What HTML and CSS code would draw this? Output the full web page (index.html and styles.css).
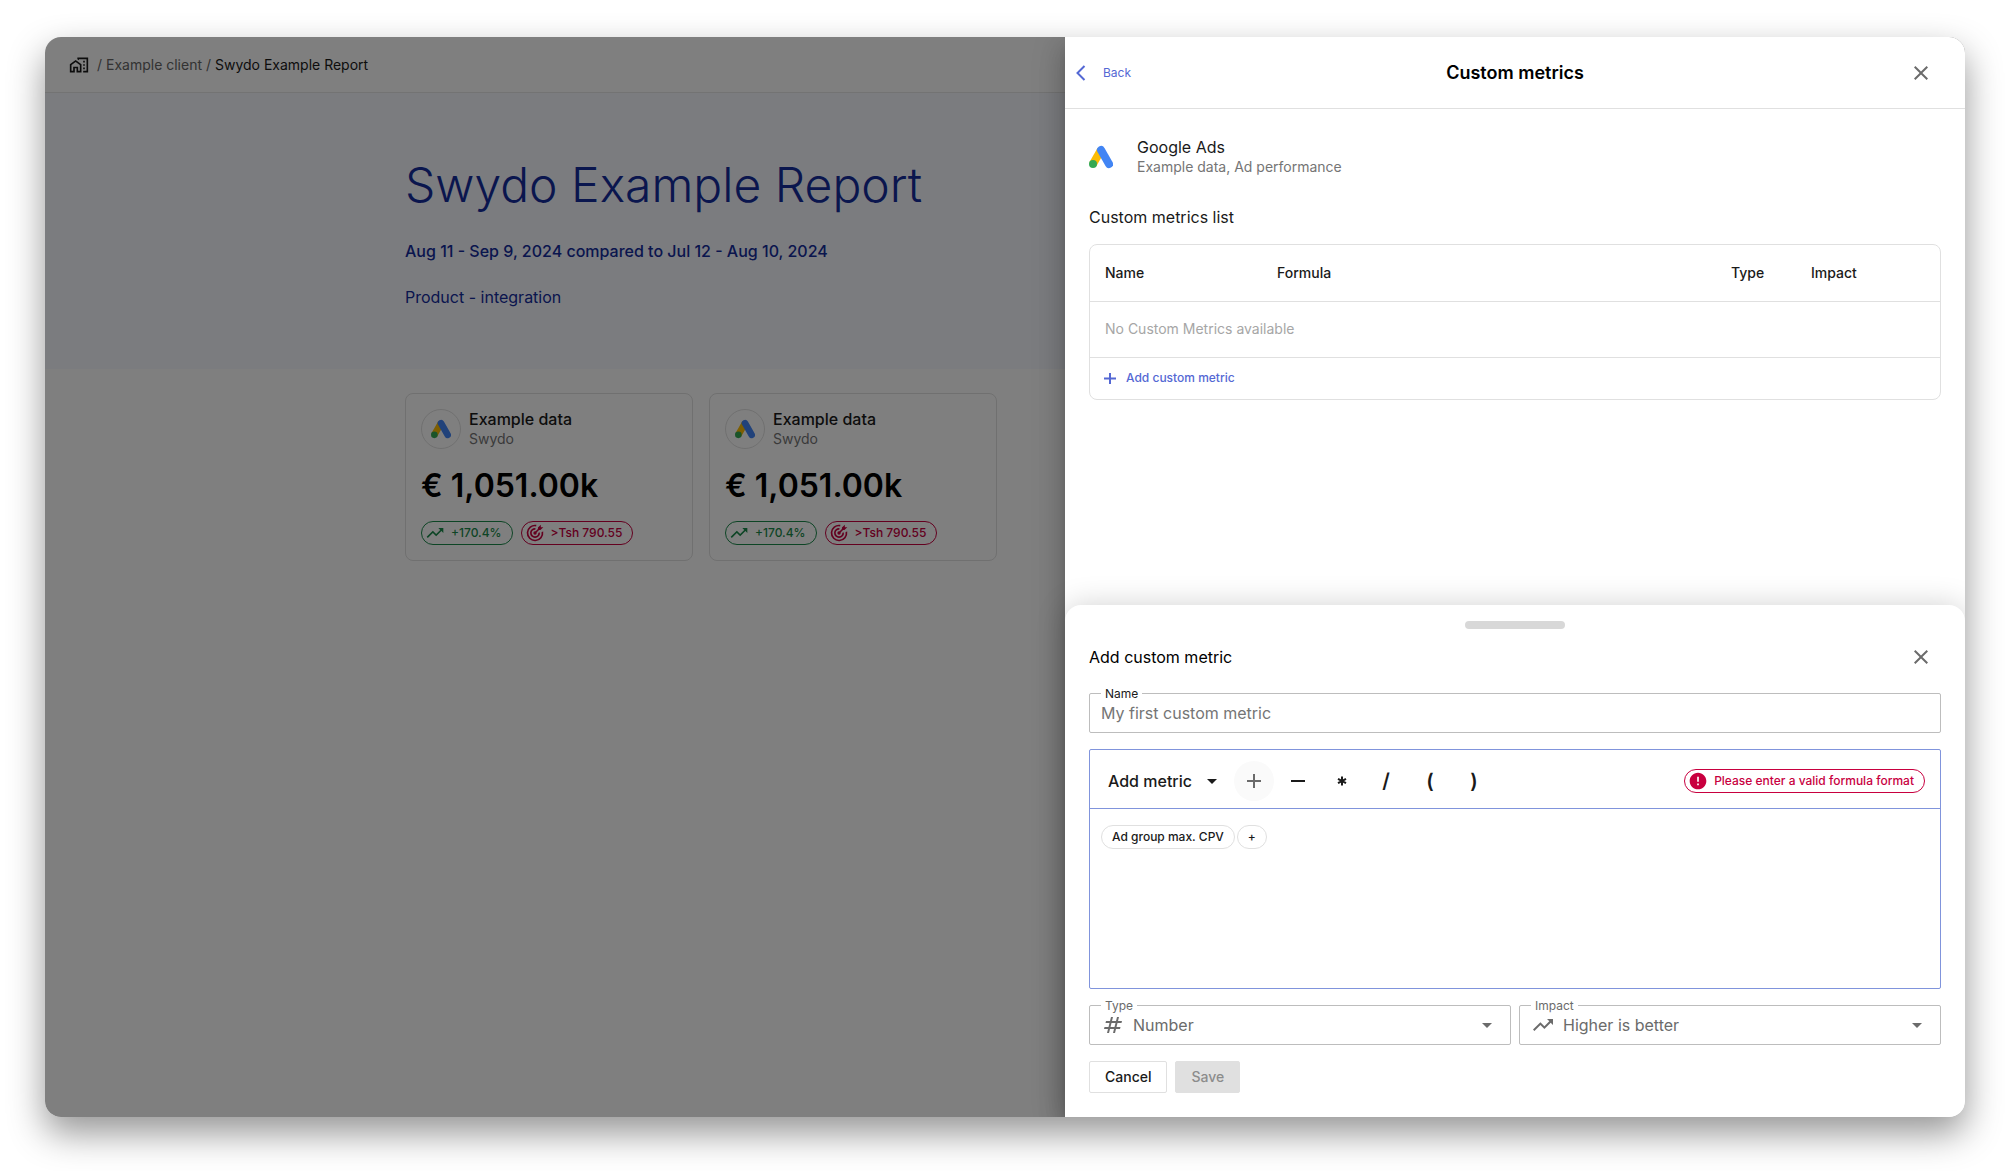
FILE: index.html
```html
<!DOCTYPE html>
<html lang="en">
  <head>
    <meta charset="utf-8">
    <meta name="viewport" content="width=device-width, initial-scale=1">
    <title>Swydo Example Report</title>
    <link rel="stylesheet" href="styles.css">
  </head>
<body>
  <!-- shared icons -->
  <svg class="sprite" aria-hidden="true">
    <symbol id="i-ads" viewBox="0 0 24 24">
      <path d="M12 5L4 19" stroke="#fbbc04" stroke-width="8" />
      <path d="M12 5l8 14" stroke="#4285f4" stroke-width="8" stroke-linecap="round" />
      <circle cx="4" cy="19" r="4" fill="#34a853" />
    </symbol>
    <symbol id="i-trend" viewBox="0 0 24 24">
      <path fill="currentColor" d="M16 6l2.29 2.29-4.88 4.88-4-4L2 16.59 3.41 18l6-6 4 4 6.3-6.29L22 12V6z" />
    </symbol>
    <symbol id="i-target" viewBox="0 0 24 24">
      <g fill="none" stroke="currentColor" stroke-width="2">
        <path d="M13.5 3.1A9 9 0 1 0 20.9 10.5" />
        <path d="M12.5 7A5 5 0 1 0 17 11.500" />
        <path d="M12 12l6-6" />
      </g>
      <circle cx="12" cy="12" r="2" fill="currentColor" />
      <path fill="currentColor" d="M15.500 5.500L19 2v3h3l-3.500 3.500h-3z" />
    </symbol>
    <symbol id="i-close" viewBox="0 0 24 24">
      <path fill="currentColor" d="M19 6.410L17.590 5 12 10.590 6.410 5 5 6.410 10.590 12 5 17.590 6.410 19 12 13.410 17.590 19 19 17.590 13.410 12z" />
    </symbol>
    <symbol id="i-caret" viewBox="0 0 24 24">
      <path fill="currentColor" d="M7 10l5 5 5-5z" />
    </symbol>
  </svg>

  <div class="window">
    <main class="report">
      <nav class="topbar">
        <svg class="icon20" viewBox="0 0 24 24" fill="currentColor">
          <path d="M1 11v10h6v-5h2v5h6V11L8 6l-7 5zm12 8h-2v-5H5v5H3v-7l5-3.500 5 3.500v7z" />
          <path d="M10 3v1.970l2 1.430V5h9v14h-4v2h6V3H10z" />
          <path d="M19 7h-2v2h2V7zM19 11h-2v2h2v-2zM19 15h-2v2h2v-2z" />
        </svg>
        <span class="crumbs">/ <a href="#">Example client</a> / <b>Swydo Example Report</b></span>
      </nav>
      <header class="hero">
        <div class="inner">
          <h1>Swydo Example Report</h1>
          <p class="dates">Aug 11 - Sep 9, 2024 compared to Jul 12 - Aug 10, 2024</p>
          <p>Product - integration</p>
        </div>
      </header>
      <div class="inner cards">
        <section class="card">
          <div class="card-head">
            <span class="logo"><svg class="icon20"><use href="#i-ads" /></svg></span>
            <div>
              <h2>Example data</h2>
              <p>Swydo</p>
            </div>
          </div>
          <div class="value">€ 1,051.00k</div>
          <div class="chips">
            <span class="chip green"><svg class="icon20"><use href="#i-trend" /></svg>+170.4%</span>
            <span class="chip red"><svg class="icon20"><use href="#i-target" /></svg>&gt;Tsh 790.55</span>
          </div>
        </section>
        <section class="card">
          <div class="card-head">
            <span class="logo"><svg class="icon20"><use href="#i-ads" /></svg></span>
            <div>
              <h2>Example data</h2>
              <p>Swydo</p>
            </div>
          </div>
          <div class="value">€ 1,051.00k</div>
          <div class="chips">
            <span class="chip green"><svg class="icon20"><use href="#i-trend" /></svg>+170.4%</span>
            <span class="chip red"><svg class="icon20"><use href="#i-target" /></svg>&gt;Tsh 790.55</span>
          </div>
        </section>
      </div>
    </main>

    <div class="overlay"></div>

    <aside class="drawer">
      <header class="drawer-head">
        <button type="button" class="back">
          <svg class="icon24" viewBox="0 0 24 24"><path d="M15.500 5l-7 7 7 7" fill="none" stroke="currentColor" stroke-width="2" /></svg>
          Back
        </button>
        <h2>Custom metrics</h2>
        <button type="button" class="close" aria-label="Close"><svg class="icon24"><use href="#i-close" /></svg></button>
      </header>

      <div class="drawer-body">
        <div class="source">
          <svg class="icon24"><use href="#i-ads" /></svg>
          <div>
            <h3>Google Ads</h3>
            <p>Example data, Ad performance</p>
          </div>
        </div>
        <h3 class="list-title">Custom metrics list</h3>
        <div class="list">
          <table>
            <thead>
              <tr>
                <th class="col-name">Name</th>
                <th>Formula</th>
                <th class="col-type">Type</th>
                <th class="col-impact">Impact</th>
              </tr>
            </thead>
            <tbody>
              <tr><td colspan="4">No Custom Metrics available</td></tr>
            </tbody>
          </table>
          <button type="button" class="add">
            <svg class="icon16" viewBox="0 0 16 16"><path d="M8 3v11M2 8.500h12" fill="none" stroke="currentColor" stroke-width="2" /></svg>
            Add custom metric
          </button>
        </div>
      </div>

      <form class="sheet">
        <div class="handle"></div>
        <div class="sheet-head">
          <h3>Add custom metric</h3>
          <button type="button" class="close" aria-label="Close"><svg class="icon24"><use href="#i-close" /></svg></button>
        </div>

        <div class="field">
          <label class="dark" for="name">Name</label>
          <input type="text" id="name" placeholder="My first custom metric">
        </div>

        <div class="formula">
          <div class="toolbar">
            <button type="button" class="add-metric">Add metric <svg class="icon24"><use href="#i-caret" /></svg></button>
            <div class="ops">
              <button type="button" class="op active" aria-label="Plus"><svg class="icon16" viewBox="0 0 16 16"><path d="M8 1v14M1 8h14" stroke="currentColor" stroke-width="2" /></svg></button>
              <button type="button" class="op" aria-label="Minus"><svg class="icon16" viewBox="0 0 16 16"><path d="M1 8h14" stroke="currentColor" stroke-width="2" /></svg></button>
              <button type="button" class="op" aria-label="Multiply"><svg class="icon16" viewBox="0 0 16 16"><path d="M8 3.500v9M4 5.800l8 4.400M12 5.800l-8 4.400" stroke="currentColor" stroke-width="2" /></svg></button>
              <button type="button" class="op">/</button>
              <button type="button" class="op">(</button>
              <button type="button" class="op">)</button>
            </div>
            <span class="chip red error">
              <svg class="icon20" viewBox="0 0 24 24"><path fill="currentColor" d="M12 2C6.480 2 2 6.480 2 12s4.480 10 10 10 10-4.480 10-10S17.520 2 12 2zm1 15h-2v-2h2v2zm0-4h-2V7h2v6z" /></svg>Please enter a valid formula format
            </span>
          </div>
          <div class="tokens">
            <span class="token">Ad group max. CPV</span>
            <span class="token">+</span>
          </div>
        </div>

        <div class="selects">
          <div class="field">
            <label for="type">Type</label>
            <svg class="icon24" viewBox="0 0 24 24"><path fill="currentColor" d="M20.500 10L21 8h-4l1-4h-2l-1 4h-4l1-4h-2L9 8H5l-.5 2h4l-1 4h-4L3 16h4l-1 4h2l1-4h4l-1 4h2l1-4h4l.5-2h-4l1-4h4zm-7 4h-4l1-4h4l-1 4z" /></svg>
            <select id="type">
              <option>Number</option>
            </select>
            <svg class="icon24"><use href="#i-caret" /></svg>
          </div>
          <div class="field">
            <label for="impact">Impact</label>
            <svg class="icon24"><use href="#i-trend" /></svg>
            <select id="impact">
              <option>Higher is better</option>
            </select>
            <svg class="icon24"><use href="#i-caret" /></svg>
          </div>
        </div>

        <div class="actions">
          <button type="button" class="btn">Cancel</button>
          <button type="submit" class="btn save" disabled>Save</button>
        </div>
      </form>
    </aside>
  </div>
</body>
</html>
```
FILE: styles.css
```css
* {
  box-sizing: border-box;
}
body {
  margin: 0;
  min-height: 100vh;
  padding: 37px 45px 54px;
  display: grid;
  background: #fff;
  color: #1a1a1a;
  font: 14px/20px Inter, "Liberation Sans", sans-serif;
}
h1, h2, h3, p {
  margin: 0;
  font-weight: 400;
}
button, input, select {
  font: inherit;
  color: inherit;
  border: 0;
  padding: 0;
  background: none;
}
button {
  cursor: pointer;
}
svg {
  display: block;
  flex: none;
  fill: none;
}
.sprite {
  position: absolute;
  width: 0;
  height: 0;
}
.icon16 {
  width: 16px;
  height: 16px;
}
.icon20 {
  width: 20px;
  height: 20px;
}
.icon24 {
  width: 24px;
  height: 24px;
}

/* report, overlay and drawer share one grid cell */
.window {
  display: grid;
  border-radius: 16px;
  overflow: hidden;
  box-shadow: 0 16px 36px rgba(0, 0, 0, .42);
}
.report, .overlay, .drawer {
  grid-area: 1 / 1;
}
.overlay {
  background: rgba(0, 0, 0, .5);
}

/* report */
.report {
  background: #fff;
}
.topbar {
  display: flex;
  align-items: center;
  gap: 8px;
  height: 56px;
  padding: 0 24px;
  border-bottom: 1px solid #e6e6e6;
}
.topbar svg {
  fill: currentColor;
}
.crumbs {
  color: #666;
}
.crumbs a {
  color: inherit;
  text-decoration: none;
}
.crumbs b {
  color: #1a1a1a;
  font-weight: 400;
}
.inner {
  max-width: 1200px;
  margin: 0 auto;
}
.hero {
  padding: 56px 0 60px;
  background: #f6f8ff;
  color: #142c9c;
  font-size: 16px;
  line-height: 24px;
}
.hero h1 {
  margin-bottom: 18px;
  font-size: 48px;
  line-height: 72px;
  font-weight: 300;
}
.dates {
  margin-bottom: 22px;
  font-weight: 500;
}
.cards {
  display: flex;
  flex-wrap: wrap;
  gap: 16px;
  padding: 24px 0;
}
.card {
  width: 288px;
  padding: 15px;
  border: 1px solid #e0e0e0;
  border-radius: 8px;
}
.card-head {
  display: flex;
  align-items: center;
  gap: 8px;
}
.card-head h2 {
  font-size: 16px;
  font-weight: 500;
}
.card-head p {
  color: #757575;
}
.logo {
  display: grid;
  place-items: center;
  width: 40px;
  height: 40px;
  border: 1px solid #e0e0e0;
  border-radius: 50%;
}
.value {
  margin: 16px 0 14px;
  color: #000;
  font-size: 32px;
  line-height: 42px;
  font-weight: 600;
}
.chips {
  display: flex;
  gap: 8px;
}
.chip {
  display: flex;
  align-items: center;
  gap: 6px;
  height: 24px;
  padding: 0 10px 0 3px;
  border: 1px solid;
  border-radius: 12px;
  font-size: 12px;
  line-height: 16px;
  font-weight: 500;
}
.green {
  color: #1b8a4b;
}
.red {
  color: #c8003f;
}

/* drawer */
.drawer {
  display: flex;
  flex-direction: column;
  justify-self: end;
  width: min(900px, 100%);
  background: #fff;
  box-shadow: 0 8px 10px -5px rgba(0, 0, 0, .2), 0 16px 24px 2px rgba(0, 0, 0, .14), 0 6px 30px 5px rgba(0, 0, 0, .12);
}
.drawer-head {
  display: grid;
  grid-template-columns: 1fr auto 1fr;
  align-items: center;
  height: 72px;
  padding: 0 32px;
  border-bottom: 1px solid #e0e0e0;
}
.drawer-head h2 {
  color: #000;
  font-size: 18px;
  line-height: 24px;
  font-weight: 600;
}
.back {
  display: flex;
  align-items: center;
  gap: 10px;
  justify-self: start;
  margin-left: -28px;
  color: #5468d4;
  font-size: 12px;
}
.close {
  justify-self: end;
  color: #6b6b6b;
}
.drawer-body {
  flex: 1;
  padding: 28px 24px;
}
.drawer h3 {
  font-size: 16px;
  line-height: 20px;
}
.source {
  display: flex;
  align-items: center;
  gap: 24px;
}
.source p {
  color: #757575;
}
.list-title {
  margin: 30px 0 17px;
}
.list {
  border: 1px solid #e0e0e0;
  border-radius: 8px;
}
table {
  width: 100%;
  table-layout: fixed;
  border-collapse: collapse;
}
th, td {
  height: 56px;
  padding: 0 0 0 15px;
  border-bottom: 1px solid #e0e0e0;
  text-align: left;
  font-weight: 500;
}
td {
  color: #a6a6a6;
  font-weight: 400;
}
.col-name {
  width: 172px;
}
.col-type {
  width: 80px;
}
.col-impact {
  width: 144px;
}
.add {
  display: flex;
  align-items: center;
  gap: 8px;
  height: 41px;
  padding: 0 12px;
  color: #5468d4;
  font-size: 12px;
  font-weight: 500;
}

/* bottom sheet */
.sheet {
  display: flex;
  flex-direction: column;
  gap: 16px;
  padding: 16px 24px 24px;
  border-radius: 16px 16px 0 0;
  background: #fff;
  box-shadow: 0 0 30px rgba(0, 0, 0, .18);
}
.handle {
  align-self: center;
  width: 100px;
  height: 8px;
  border-radius: 4px;
  background: #d8d8d8;
}
.sheet-head {
  display: flex;
  align-items: center;
  justify-content: space-between;
  padding: 0 8px 8px 0;
  color: #000;
}
.field {
  position: relative;
  flex: 1;
  display: flex;
  align-items: center;
  gap: 8px;
  min-height: 40px;
  padding: 0 11px;
  border: 1px solid #bdbdbd;
  border-radius: 2px;
  color: #6b6b6b;
  font-size: 16px;
}
.field label {
  position: absolute;
  top: -8px;
  left: 11px;
  padding: 0 4px;
  background: #fff;
  font-size: 12px;
  line-height: 16px;
}
.field .dark {
  color: #1a1a1a;
}
.field input, .field select {
  flex: 1;
  min-width: 0;
  height: 38px;
  outline: 0;
  appearance: none;
}
.field input::placeholder {
  color: #757575;
}
.formula {
  min-height: 240px;
  border: 1px solid #8094dc;
  border-radius: 2px;
}
.toolbar {
  display: flex;
  align-items: center;
  height: 59px;
  padding: 3px 15px 0 18px;
  border-bottom: 1px solid #8094dc;
}
.add-metric {
  display: flex;
  align-items: center;
  gap: 8px;
  font-size: 16px;
  font-weight: 500;
}
.ops {
  display: flex;
  gap: 4px;
  margin-left: 10px;
}
.op {
  display: grid;
  place-items: center;
  width: 40px;
  height: 40px;
  border-radius: 50%;
  font-size: 20px;
  font-weight: 600;
}
.op.active {
  background: #fafafa;
  color: #6b6b6b;
}
.error {
  margin-left: auto;
}
.tokens {
  display: flex;
  gap: 2px;
  padding: 16px 11px;
}
.token {
  padding: 3px 10px;
  border: 1px solid #e0e0e0;
  border-radius: 12px;
  font-size: 12px;
  line-height: 16px;
  font-weight: 500;
}
.selects {
  display: flex;
  gap: 8px;
}
.actions {
  display: flex;
  gap: 8px;
}
.btn {
  height: 32px;
  padding: 0 15px;
  border: 1px solid #e0e0e0;
  border-radius: 2px;
  font-weight: 500;
}
.save {
  background: #e0e0e0;
  color: #8c8c8c;
}
```
